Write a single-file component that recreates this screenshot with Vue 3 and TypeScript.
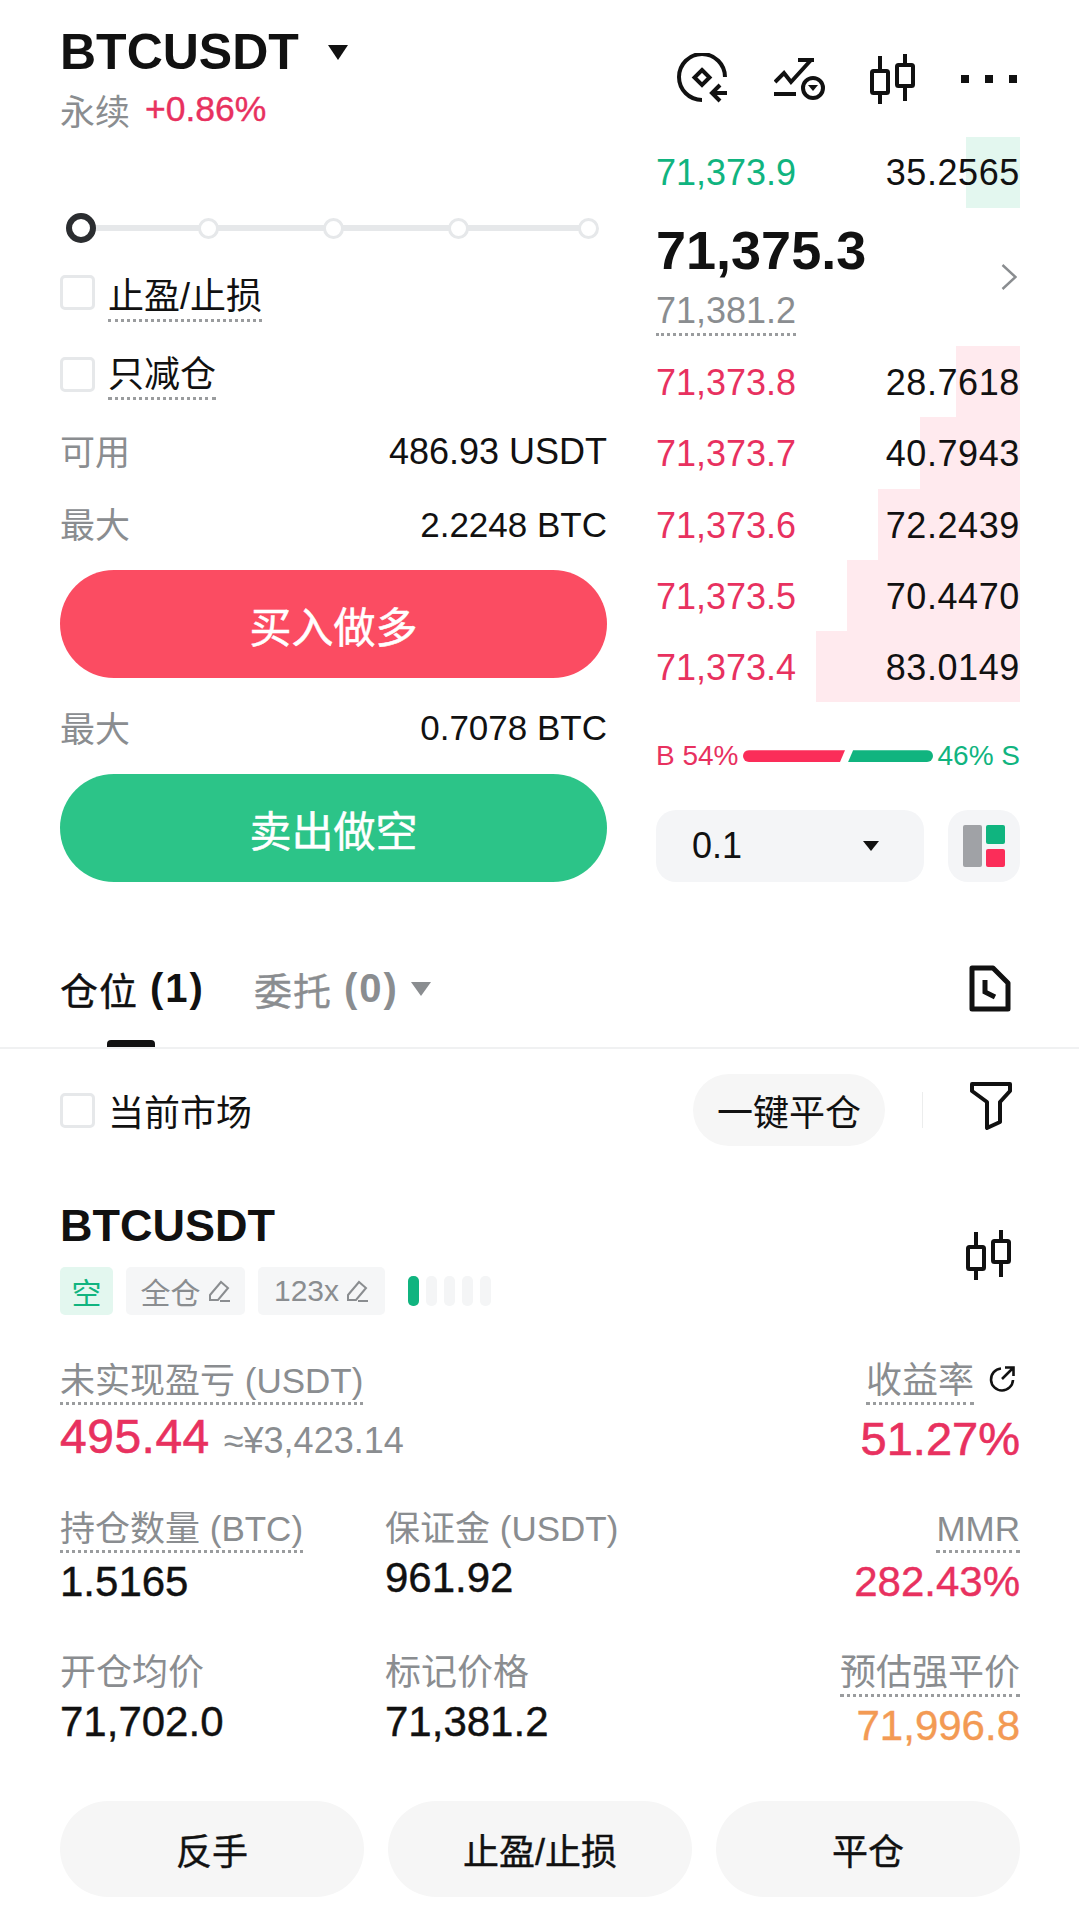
<template>
  <div class="page">
    <div class="trade">
      <!-- 下单区 -->
      <div class="order">
        <div class="symbol">
          <span class="symbol__name">BTCUSDT</span>
          <i class="tri tri--lg"></i>
        </div>
        <div class="sub">
          <span class="sub__type">永续</span>
          <span class="sub__pct">+0.86%</span>
        </div>
        <div class="slider">
          <span v-for="n in 5" :key="n" class="slider__dot" :class="{ 'slider__dot--on': n === 1 }"></span>
        </div>
        <div class="check check--first">
          <span class="check__box"></span>
          <span class="dotted">止盈/止损</span>
        </div>
        <div class="check">
          <span class="check__box"></span>
          <span class="dotted">只减仓</span>
        </div>
        <div class="kv kv--first"><span class="muted">可用</span><span>486.93 USDT</span></div>
        <div class="kv kv--btc"><span class="muted">最大</span><span>2.2248 BTC</span></div>
        <div class="big-btn big-btn--buy">买入做多</div>
        <div class="kv kv--btc kv--sell"><span class="muted">最大</span><span>0.7078 BTC</span></div>
        <div class="big-btn big-btn--sell">卖出做空</div>
      </div>

      <!-- 盘口 -->
      <div class="book">
        <div class="tools">
          <svg class="tool" width="52" height="52" viewBox="0 0 52 52" fill="none" stroke="#111" stroke-width="4">
            <path d="M25 47A23 23 0 1 1 48 24" />
            <path d="M25 17l7.500 7.500-7.500 7.500-7.500-7.500z" />
            <path d="M50 40H37M43 32l-8 8 8 8" />
          </svg>
          <svg class="tool" width="52" height="42" viewBox="0 0 52 42" fill="none" stroke="#111" stroke-width="4">
            <path d="M1 24l9-9 7 9L37 2M24 2h16" />
            <path d="M0 36h22" />
            <circle cx="39" cy="30" r="10" />
            <path d="M34 27h10l-5 6z" fill="#111" stroke="none" />
          </svg>
          <svg class="tool" width="46" height="50" viewBox="0 0 46 50" fill="none" stroke="#111" stroke-width="4">
            <path d="M10 2v15M10 39v11M35 0v11M35 32v15" />
            <rect x="2" y="17" width="16" height="22" rx="1.500" />
            <rect x="27" y="11" width="16" height="21" rx="1.500" />
          </svg>
          <div class="tool-dots"><i></i><i></i><i></i></div>
        </div>

        <div class="row row--ask">
          <i class="row__bar row__bar--green"></i>
          <span class="green">71,373.9</span>
          <span class="row__qty">35.2565</span>
        </div>

        <div class="last">
          <div>
            <div class="last__price">71,375.3</div>
            <div class="last__mark"><span class="dotted">71,381.2</span></div>
          </div>
          <svg width="16" height="26" viewBox="0 0 16 26" fill="none" stroke="#8a8d90" stroke-width="2.400">
            <path d="M1.500 1l13 12-13 12" />
          </svg>
        </div>

        <div v-for="row in bids" :key="row.price" class="row">
          <i class="row__bar" :style="{ width: row.bar + 'px' }"></i>
          <span class="red">{{ row.price }}</span>
          <span class="row__qty">{{ row.qty }}</span>
        </div>

        <div class="ratio">
          <span class="red">B 54%</span>
          <div class="ratio__bars">
            <i class="ratio__red"></i>
            <i class="ratio__green"></i>
          </div>
          <span class="green">46% S</span>
        </div>

        <div class="depth">
          <div class="depth__select">
            <span>0.1</span>
            <i class="tri tri--sm"></i>
          </div>
          <div class="depth__mode">
            <i class="mode-gray"></i>
            <div class="mode-col"><i class="mode-green"></i><i class="mode-red"></i></div>
          </div>
        </div>
      </div>
    </div>

    <!-- 仓位 / 委托 -->
    <div class="tabs">
      <div class="tabs__item tabs__item--on">仓位 <b>(1)</b><i class="tabs__line"></i></div>
      <div class="tabs__item">委托 <b>(0)</b><i class="tri tri--gray"></i></div>
      <svg class="tabs__doc" width="42" height="48" viewBox="0 0 42 48" fill="none" stroke="#111" stroke-width="5" stroke-linejoin="round">
        <path d="M3 3h21l15 15v26H3z" />
        <path d="M16 15v12l10 5" stroke-linejoin="miter" />
      </svg>
    </div>

    <div class="market">
      <div class="check check--plain">
        <span class="check__box"></span>
        <span>当前市场</span>
      </div>
      <div class="market__right">
        <div class="pill">一键平仓</div>
        <i class="market__sep"></i>
        <svg class="market__filter" width="42" height="48" viewBox="0 0 42 48" fill="none" stroke="#111" stroke-width="4" stroke-linejoin="round">
          <path d="M2 2h38v7L30 20v20l-13 6V20L2 9z" />
        </svg>
      </div>
    </div>

    <div class="pos">
      <div class="pos__head">
        <div>
          <div class="pos__name">BTCUSDT</div>
          <div class="tags">
            <span class="tag tag--short">空</span>
            <span class="tag tag--margin">全仓
              <svg width="24" height="24" viewBox="0 0 24 24" fill="none" stroke="#8a8d90" stroke-width="2"><path d="M3 16L14 3l7 6-10 12H3zM13 22h10" /></svg>
            </span>
            <span class="tag tag--lever">123x
              <svg width="24" height="24" viewBox="0 0 24 24" fill="none" stroke="#8a8d90" stroke-width="2"><path d="M3 16L14 3l7 6-10 12H3zM13 22h10" /></svg>
            </span>
            <div class="risk"><i class="risk__on"></i><i></i><i></i><i></i><i></i></div>
          </div>
        </div>
        <svg class="pos__chart" width="46" height="50" viewBox="0 0 46 50" fill="none" stroke="#111" stroke-width="4">
          <path d="M10 2v15M10 39v11M35 0v11M35 32v15" />
          <rect x="2" y="17" width="16" height="22" rx="1.500" />
          <rect x="27" y="11" width="16" height="21" rx="1.500" />
        </svg>
      </div>

      <div class="pnl">
        <div>
          <div class="label label--mix"><span class="dotted">未实现盈亏 (USDT)</span></div>
          <div class="pnl__val"><span class="num-lg pnl__num red">495.44</span><span class="pnl__cny">≈¥3,423.14</span></div>
        </div>
        <div class="right">
          <div class="label">
            <span class="dotted">收益率</span>
            <svg class="share" width="28" height="28" viewBox="0 0 28 28" fill="none" stroke="#111" stroke-width="2.600">
              <path d="M13 3.500A11 11 0 1 0 25 15" />
              <path d="M14 14L25 3M17 2.500h8.500v8.500" />
            </svg>
          </div>
          <div class="num-lg pnl__pct red">51.27%</div>
        </div>
      </div>

      <div class="grid">
        <div v-for="cell in cells" :key="cell.label" class="cell" :class="{ right: cell.right }">
          <div class="label" :class="{ 'label--mix': cell.mix }"><span :class="{ dotted: cell.dotted }">{{ cell.label }}</span></div>
          <div class="cell__val" :class="cell.color">{{ cell.value }}</div>
        </div>
      </div>

      <div class="actions">
        <div class="action">反手</div>
        <div class="action">止盈/止损</div>
        <div class="action">平仓</div>
      </div>
    </div>
  </div>
</template>

<script setup lang="ts">
interface BidRow {
  price: string
  qty: string
  bar: number
}

interface Cell {
  label: string
  value: string
  dotted?: boolean
  right?: boolean
  mix?: boolean
  color?: string
}

const bids: BidRow[] = [
  { price: '71,373.8', qty: '28.7618', bar: 64 },
  { price: '71,373.7', qty: '40.7943', bar: 100 },
  { price: '71,373.6', qty: '72.2439', bar: 142 },
  { price: '71,373.5', qty: '70.4470', bar: 173 },
  { price: '71,373.4', qty: '83.0149', bar: 204 },
]

const cells: Cell[] = [
  { label: '持仓数量 (BTC)', value: '1.5165', dotted: true, mix: true },
  { label: '保证金 (USDT)', value: '961.92', mix: true },
  { label: 'MMR', value: '282.43%', dotted: true, right: true, mix: true, color: 'red' },
  { label: '开仓均价', value: '71,702.0' },
  { label: '标记价格', value: '71,381.2' },
  { label: '预估强平价', value: '71,996.8', dotted: true, right: true, color: 'orange' },
]
</script>

<style>
html,
body {
  background: #fff;
}
</style>

<style scoped>
.page {
  width: 1079px;
  height: 1929px;
  overflow: hidden;
  background: #fff;
  color: #111;
  font-family: "Liberation Sans", "Noto Sans CJK SC", sans-serif;
  font-size: 36px;
}

i {
  display: block;
  font-style: normal;
}

.red { color: #e8315f; }
.green { color: #10b47f; }
.orange { color: #f39a54; }
.muted { color: #8a8d90; }

.dotted {
  display: inline-block;
  border-bottom: 3px dotted #9a9c9e;
  padding-bottom: 1px;
  line-height: 1.2;
}

.tri {
  display: inline-block;
  width: 0;
  height: 0;
  border-style: solid;
  border-color: #111 transparent transparent;
}

.tri--lg { border-width: 15px 10px 0; margin-left: 29px; }
.tri--sm { border-width: 10px 8px 0; }
.tri--gray { border-width: 14px 10px 0; border-top-color: #8a8d90; }

/* 上半部分 */
.trade {
  display: grid;
  grid-template-columns: 547px 364px;
  justify-content: space-between;
  padding: 0 59px 0 60px;
}

.order {
  display: flex;
  flex-direction: column;
  padding-top: 17px;
}

.symbol {
  display: flex;
  align-items: center;
  height: 70px;
}

.symbol__name {
  font-size: 50px;
  font-weight: 700;
}

.sub {
  display: flex;
  align-items: center;
  gap: 15px;
  height: 44px;
}

.sub__type {
  color: #8a8d90;
  font-size: 35px;
}

.sub__pct {
  color: #e8315f;
  font-size: 35.5px;
  -webkit-text-stroke: 0.4px #e8315f;
}

.slider {
  position: relative;
  display: flex;
  align-items: center;
  gap: 104px;
  height: 50px;
  margin-top: 72px;
  padding-left: 6px;
}

.slider::before {
  content: "";
  position: absolute;
  left: 14px;
  right: 14px;
  top: 22px;
  height: 6px;
  background: #e6e8ea;
}

.slider__dot {
  position: relative;
  box-sizing: border-box;
  width: 21px;
  height: 21px;
  border: 3px solid #e6e8ea;
  border-radius: 50%;
  background: #fff;
}

.slider__dot:last-child {
  margin-left: 5px;
}

.slider__dot--on {
  width: 30px;
  height: 30px;
  margin-right: -2.500px;
  border: 6px solid #2b2d30;
}

.check {
  display: flex;
  align-items: flex-start;
  gap: 13px;
  height: 70px;
  margin-top: 12px;
}

.check--first {
  margin-top: 4px;
}

.check__box {
  flex: none;
  box-sizing: border-box;
  width: 35px;
  height: 35px;
  margin-top: 18px;
  border: 3px solid #e6e8ea;
  border-radius: 5px;
}

.check .dotted {
  margin-top: 14px;
}

.check--first .dotted {
  margin-top: 18px;
}

.kv {
  display: flex;
  justify-content: space-between;
  align-items: center;
  height: 73px;
}

.kv--first {
  margin-top: 6px;
}

.kv--btc {
  font-size: 35px;
}

.kv .muted {
  margin-bottom: 4px;
  font-size: 35px;
}

.kv--sell {
  height: 96px;
  padding-top: 4px;
  box-sizing: border-box;
}

.big-btn {
  display: flex;
  align-items: center;
  justify-content: center;
  height: 108px;
  border-radius: 54px;
  color: #fff;
  font-size: 42px;
  -webkit-text-stroke: 0.5px #fff;
}

.big-btn--buy {
  margin-top: 9px;
  background: #fb4c62;
}

.big-btn--sell {
  background: #2cc488;
}

/* 盘口 */
.book {
  display: flex;
  flex-direction: column;
}

.tools {
  display: flex;
  align-items: center;
  justify-content: space-between;
  height: 137px;
  padding: 20px 3px 0 21px;
  box-sizing: border-box;
}

.tool-dots {
  display: flex;
  gap: 16px;
}

.tool-dots i {
  width: 8px;
  height: 8px;
  background: #111;
}

.row {
  position: relative;
  display: flex;
  align-items: center;
  justify-content: space-between;
  box-sizing: border-box;
  height: 71.2px;
  padding-top: 3px;
}

.row--ask {
  padding-top: 0;
}

.row span {
  position: relative;
}

.row__bar {
  position: absolute;
  right: 0;
  top: 0;
  bottom: 0;
  background: #ffeaee;
}

.row__bar--green {
  width: 54px;
  background: #e3f7ef;
}

.row__qty {
  color: #111;
  letter-spacing: 0.6px;
}

.last {
  display: flex;
  align-items: center;
  justify-content: space-between;
  height: 138px;
  padding-right: 3px;
}

.last__price {
  margin-top: -4px;
  font-size: 54px;
  font-weight: 700;
  line-height: 70px;
}

.last__mark {
  margin-top: 4px;
  color: #8a8d90;
  line-height: 44px;
}

.ratio {
  display: flex;
  align-items: center;
  justify-content: space-between;
  margin-top: 36px;
  height: 36px;
  font-size: 28px;
}

.ratio__bars {
  display: flex;
  gap: 3px;
}

.ratio__red {
  width: 102px;
  height: 12px;
  border-radius: 6px 0 0 6px;
  background: #fb2d59;
  clip-path: polygon(0 0, 100% 0, 95% 100%, 0 100%);
}

.ratio__green {
  width: 85px;
  height: 12px;
  border-radius: 0 6px 6px 0;
  background: #10b47f;
  clip-path: polygon(6% 0, 100% 0, 100% 100%, 0 100%);
}

.depth {
  display: flex;
  justify-content: space-between;
  margin-top: 36px;
}

.depth__select {
  display: flex;
  align-items: center;
  justify-content: space-between;
  width: 268px;
  height: 72px;
  padding: 0 45px 0 36px;
  box-sizing: border-box;
  border-radius: 20px;
  background: #f4f5f7;
}

.depth__mode {
  display: flex;
  align-items: center;
  justify-content: center;
  gap: 4px;
  width: 72px;
  height: 72px;
  border-radius: 20px;
  background: #f4f5f7;
}

.mode-gray {
  width: 19px;
  height: 42px;
  border-radius: 2px;
  background: #a0a2a6;
}

.mode-col {
  display: flex;
  flex-direction: column;
  gap: 5px;
}

.mode-green,
.mode-red {
  width: 19px;
  height: 18.5px;
  border-radius: 2px;
  background: #10b47f;
}

.mode-red {
  background: #fb2d59;
}

/* tab */
.tabs {
  position: relative;
  display: flex;
  align-items: center;
  gap: 49px;
  height: 119px;
  margin-top: 48px;
  padding: 0 59px 0 60px;
  border-bottom: 2px solid #f0f1f2;
  box-sizing: border-box;
}

.tabs__item {
  display: flex;
  align-items: center;
  gap: 12px;
  color: #8a8d90;
  font-size: 38px;
  letter-spacing: 1px;
  -webkit-text-stroke: 0.4px;
}

.tabs__item b {
  font-size: 40px;
  font-weight: 700;
  letter-spacing: 2px;
  -webkit-text-stroke: 0;
}

.tabs__item--on {
  color: #111;
}

.tabs__line {
  position: absolute;
  left: 107px;
  bottom: 0;
  width: 48px;
  height: 7px;
  border-radius: 4px 4px 0 0;
  background: #111;
}

.tabs__doc {
  margin-left: auto;
  margin-right: 9px;
}

.market {
  display: flex;
  align-items: center;
  justify-content: space-between;
  height: 72px;
  margin-top: 25px;
  padding: 0 67px 0 60px;
}

.check--plain {
  align-items: center;
  height: auto;
  margin-top: 0;
}

.check--plain .check__box {
  margin-top: 0;
}

.market__right {
  display: flex;
  align-items: center;
}

.market__filter {
  margin-bottom: 9px;
}

.pill {
  display: flex;
  align-items: center;
  justify-content: center;
  width: 192px;
  height: 72px;
  border-radius: 36px;
  background: #f6f6f6;
}

.market__sep {
  width: 1px;
  height: 36px;
  margin: 0 47px 0 37px;
  background: #eceded;
}

/* 持仓卡片 */
.pos {
  padding: 0 59px 0 60px;
}

.pos__head {
  display: flex;
  align-items: flex-end;
  justify-content: space-between;
  margin-top: 54px;
}

.pos__name {
  font-size: 45px;
  font-weight: 700;
  line-height: 52px;
}

.tags {
  display: flex;
  align-items: center;
  gap: 13px;
  margin-top: 15px;
}

.tag {
  display: flex;
  align-items: center;
  justify-content: center;
  gap: 6px;
  box-sizing: border-box;
  width: 53px;
  height: 48px;
  border-radius: 5px;
  background: #f5f6f7;
  color: #8a8d90;
  font-size: 30px;
}

.tag--margin {
  width: 119px;
}

.tag--lever {
  width: 127px;
}

.tag--short {
  background: #e3f7ef;
  color: #10b47f;
}

.risk {
  display: flex;
  gap: 7px;
  margin-left: 10px;
}

.risk i {
  width: 11px;
  height: 30px;
  border-radius: 5px;
  background: #f4f5f6;
}

.risk .risk__on {
  background: #10b47f;
}

.pos__chart {
  margin: 0 8px 35px 0;
}

.pnl {
  display: flex;
  justify-content: space-between;
  margin-top: 46px;
}

.label {
  display: flex;
  align-items: center;
  gap: 14px;
  color: #8a8d90;
  font-size: 36px;
  line-height: 40px;
}

.label span {
  line-height: 40px;
}

.label--mix {
  font-size: 35px;
}

.right {
  text-align: right;
}

.right .label {
  justify-content: flex-end;
}

.share {
  margin: 0 4px 8px 0;
}

.pnl__val {
  margin-top: 3px;
}

.num-lg {
  display: inline-block;
  font-size: 47px;
  line-height: 58px;
  -webkit-text-stroke: 0.6px;
}

.pnl__num {
  font-size: 48px;
  letter-spacing: 0.5px;
}

.pnl__pct {
  display: block;
  margin-top: 5px;
}

.pnl__cny {
  margin-left: 14px;
  color: #8a8d90;
}

.grid {
  display: grid;
  grid-template-columns: 325px 1fr 1fr;
  row-gap: 42px;
  margin-top: 41px;
}

.cell__val {
  font-size: 42px;
  line-height: 58px;
  -webkit-text-stroke: 0.4px;
}

.actions {
  display: flex;
  gap: 24px;
  margin-top: 46px;
}

.action {
  display: flex;
  flex: 1;
  align-items: center;
  justify-content: center;
  height: 96px;
  border-radius: 48px;
  background: #f6f6f6;
  -webkit-text-stroke: 0.4px;
}
</style>
